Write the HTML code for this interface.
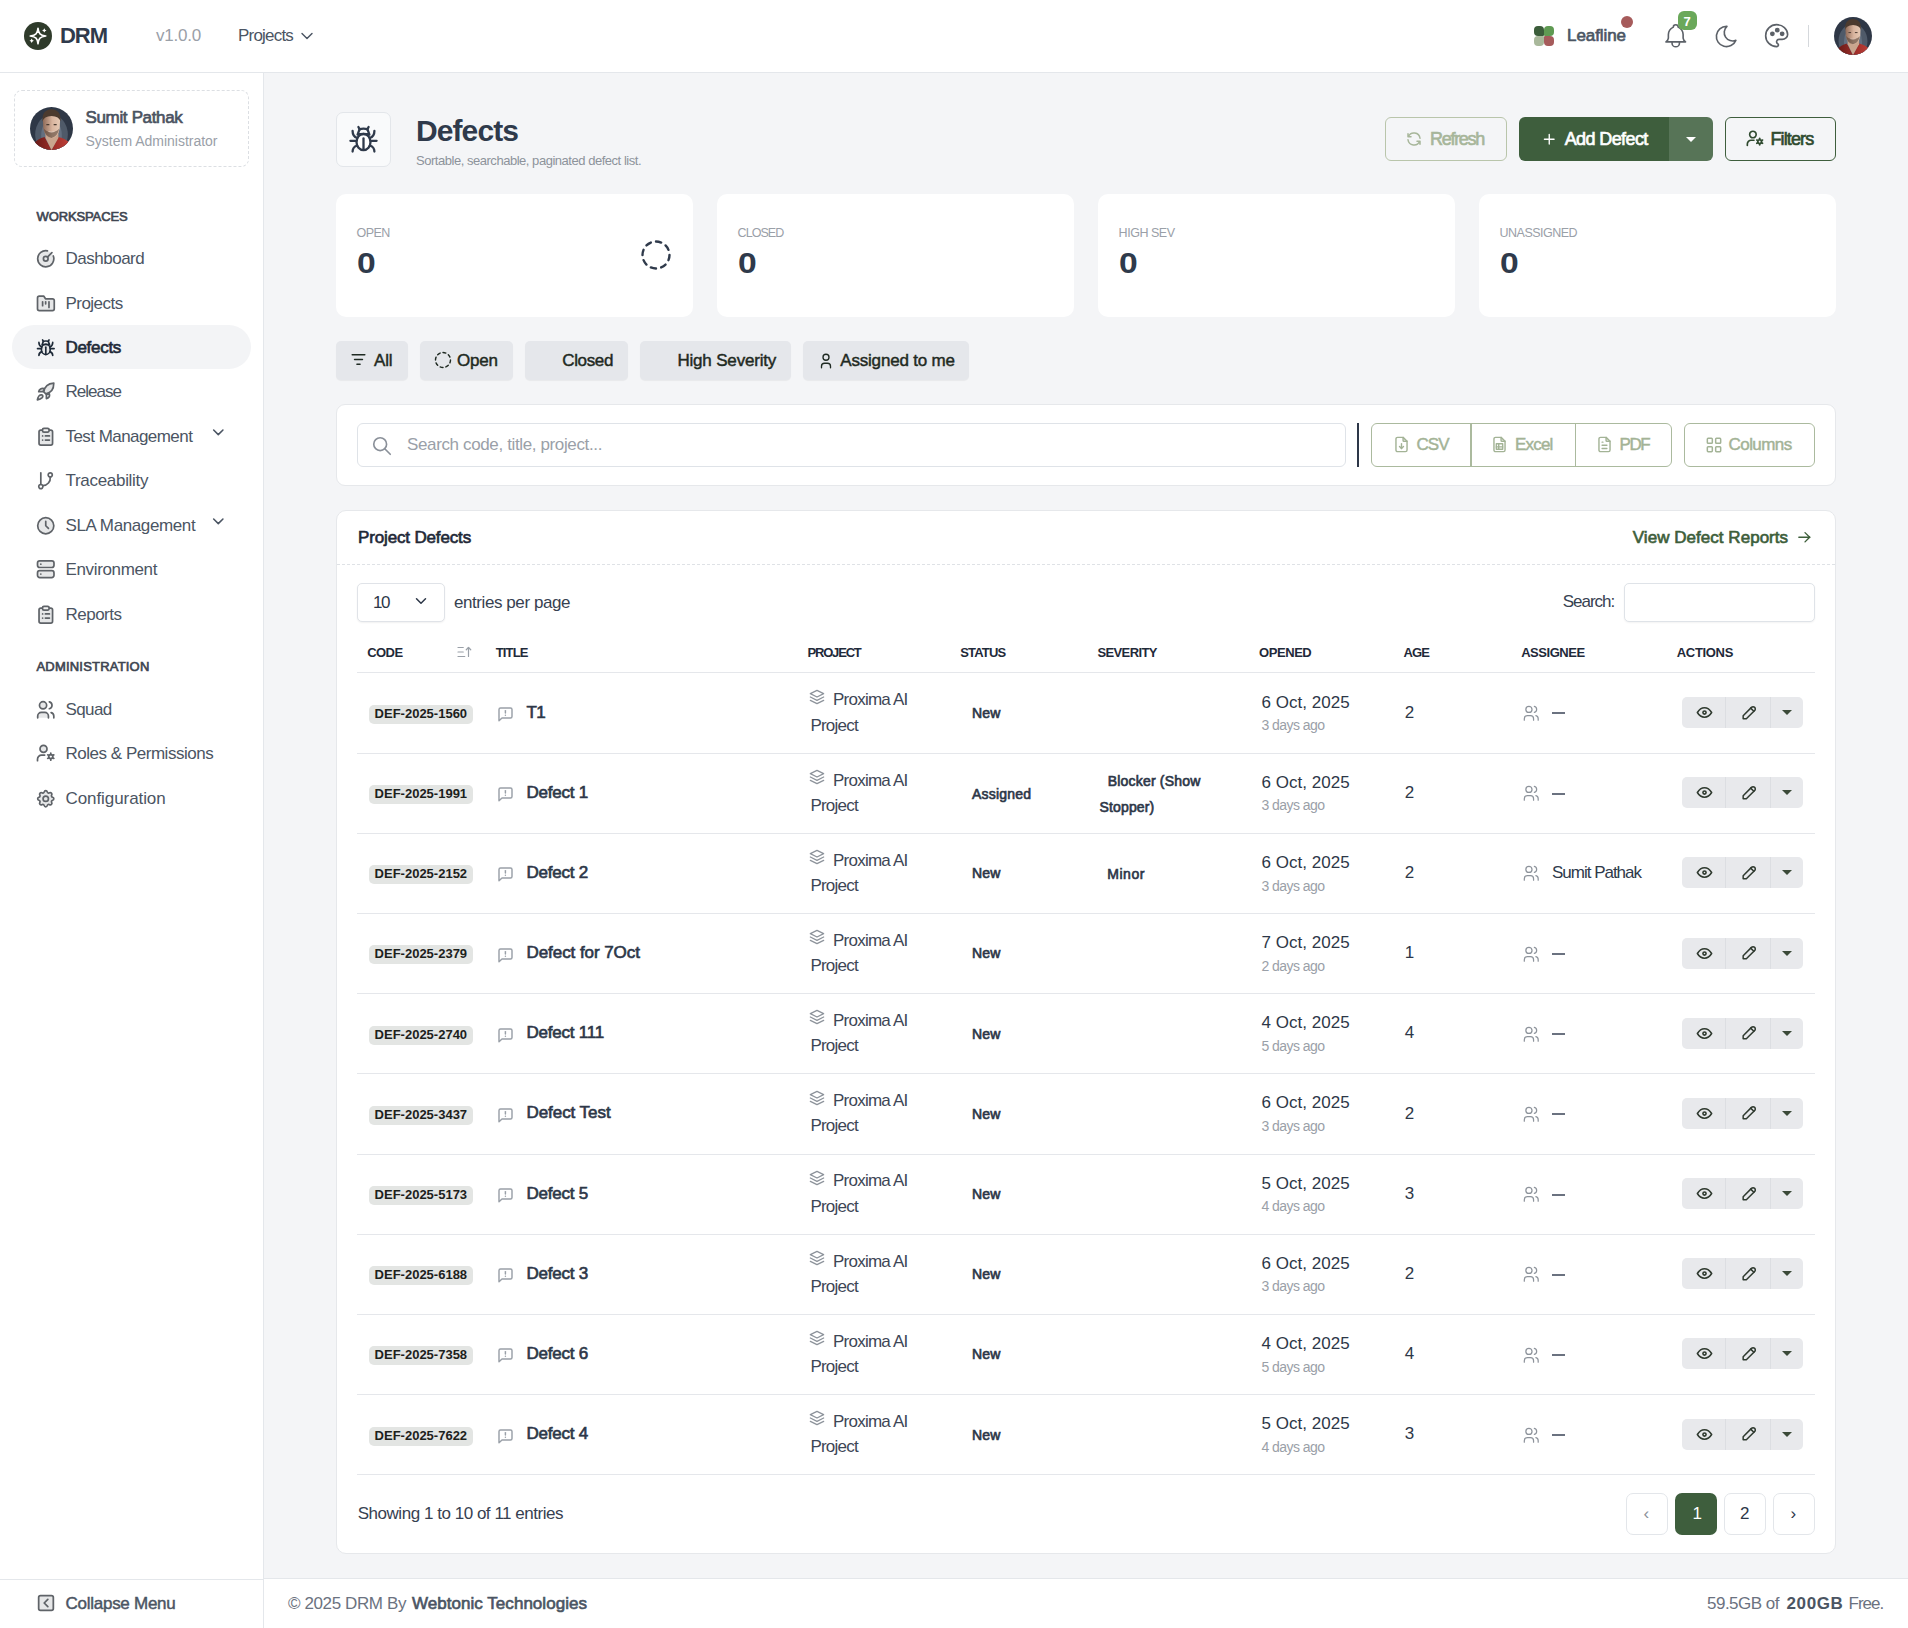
<!DOCTYPE html>
<html><head><meta charset="utf-8"><title>Defects</title>
<style>
html,body{margin:0;padding:0;}
body{width:1908px;height:1628px;overflow:hidden;position:relative;background:#f4f5f7;font-family:"Liberation Sans",sans-serif;}
.t{position:absolute;white-space:nowrap;line-height:1;}
.b{position:absolute;box-sizing:border-box;}
svg.b{overflow:visible;}
</style></head><body>
<div class="b" style="left:0px;top:0px;width:1908px;height:73px;background:#fff;border-bottom:1px solid #e4e7eb;"></div>
<svg class="b" style="left:24px;top:22px" width="28" height="28" viewBox="0 0 28 28"><circle cx="14" cy="14" r="14" fill="#2f3b2b"/><path d="M14 6.2 C14.6 11.7 16 13.2 21.8 14 C16 14.8 14.6 16.3 14 21.8 C13.4 16.3 12 14.8 6.2 14 C12 13.2 13.4 11.7 14 6.2Z" fill="none" stroke="#fff" stroke-width="1.6" stroke-linejoin="round"/><path d="M20.3 6.2 Q20.8 7.9 22.5 8.4 Q20.8 8.9 20.3 10.6 Q19.8 8.9 18.1 8.4 Q19.8 7.9 20.3 6.2Z" fill="#fff"/><path d="M7.7 16.6 Q8.2 18.3 9.9 18.8 Q8.2 19.3 7.7 21 Q7.2 19.3 5.5 18.8 Q7.2 18.3 7.7 16.6Z" fill="#fff"/></svg>
<span class="t" style="left:60.0px;top:24.88px;font-size:22px;color:#2f3a4b;font-weight:700;letter-spacing:-1.034px;">DRM</span>
<span class="t" style="left:156.0px;top:27.11px;font-size:17px;color:#9aa0a8;letter-spacing:-0.218px;">v1.0.0</span>
<span class="t" style="left:238.0px;top:27.11px;font-size:17px;color:#4b5563;letter-spacing:-0.801px;">Projects</span>
<svg class="b" style="left:297px;top:26px;" width="20" height="20" viewBox="0 0 24 24" fill="none" stroke="#4b5563" stroke-width="1.7" stroke-linecap="round" stroke-linejoin="round"><path d="M6 9l6 6l6 -6"/></svg>
<div class="b" style="left:1534px;top:26px;width:9.5px;height:9.5px;background:#3b5d3a;border-radius:4px 4px 1px 4px;"></div>
<div class="b" style="left:1544px;top:26px;width:9.5px;height:9.5px;background:#5f9a52;border-radius:4px 4px 4px 1px;"></div>
<div class="b" style="left:1534px;top:36px;width:9.5px;height:9.5px;background:#a9b89b;border-radius:4px 1px 4px 4px;"></div>
<div class="b" style="left:1544px;top:36px;width:9.5px;height:9.5px;background:#a65b5b;border-radius:1px 4px 4px 4px;"></div>
<span class="t" style="left:1567.0px;top:26.61px;font-size:17px;color:#4b5563;-webkit-text-stroke:0.65px #4b5563;letter-spacing:-0.068px;">Leafline</span>
<div class="b" style="left:1621px;top:16px;width:12px;height:12px;background:#a65b5b;border-radius:50%;"></div>
<svg class="b" style="left:1661px;top:21.3px;" width="29.5" height="29.5" viewBox="0 0 24 24" fill="none" stroke="#5c6168" stroke-width="1.3" stroke-linecap="round" stroke-linejoin="round"><path d="M10 5a2 2 0 1 1 4 0a7 7 0 0 1 4 6v3a4 4 0 0 0 2 3h-16a4 4 0 0 0 2 -3v-3a7 7 0 0 1 4 -6"/><path d="M9 17v1a3 3 0 0 0 6 0v-1"/></svg>
<div class="b" style="left:1678px;top:11px;width:19px;height:19px;background:#6aa85a;border-radius:6px;"></div>
<span class="t" style="left:1683.5px;top:15.00px;font-size:13px;color:#fff;font-weight:700;">7</span>
<svg class="b" style="left:1713.4px;top:22.6px;" width="27" height="27" viewBox="0 0 24 24" fill="none" stroke="#5c6168" stroke-width="1.45" stroke-linecap="round" stroke-linejoin="round"><path d="M12 3c.132 0 .263 0 .393 0a7.5 7.5 0 0 0 7.92 12.446a9 9 0 1 1 -8.313 -12.454z"/></svg>
<svg class="b" style="left:1762.3px;top:21.3px;" width="29.3" height="29.3" viewBox="0 0 24 24" fill="none" stroke="#5c6168" stroke-width="1.35" stroke-linecap="round" stroke-linejoin="round"><path d="M12 21a9 9 0 0 1 0 -18c4.97 0 9 3.582 9 8c0 1.06 -.474 2.078 -1.318 2.828c-.844 .75 -1.989 1.172 -3.182 1.172h-2.5a2 2 0 0 0 -1 3.75a1.3 1.3 0 0 1 -1 2.25"/><circle cx="8.5" cy="10.5" r="1.3" fill="#5c6168"/><circle cx="12.5" cy="7.5" r="1.3" fill="#5c6168"/><circle cx="16.5" cy="10.5" r="1.3" fill="#5c6168"/></svg>
<div class="b" style="left:1808px;top:25px;width:1px;height:22px;background:#d5d8dc;"></div>
<svg class="b" style="left:1834px;top:17px" width="38" height="38" viewBox="0 0 100 100"><defs><clipPath id="ca"><circle cx="50" cy="50" r="50"/></clipPath></defs><g clip-path="url(#ca)"><defs><linearGradient id="fg" x1="0" x2="1" y1="0" y2="0"><stop offset="0" stop-color="#8f6a57"/><stop offset="0.55" stop-color="#d9b59f"/><stop offset="1" stop-color="#e6c9b4"/></linearGradient><linearGradient id="sg" x1="0" x2="1" y1="0" y2="0"><stop offset="0" stop-color="#5e1714"/><stop offset="0.6" stop-color="#a3302b"/><stop offset="1" stop-color="#c4443c"/></linearGradient></defs><rect x="0" y="0" width="100" height="100" fill="#2e3746"/><ellipse cx="50" cy="64" rx="38" ry="46" fill="#4f5a69"/><ellipse cx="50" cy="66" rx="24" ry="38" fill="#647080"/><path d="M8 86 Q18 74 34 70 L50 100 L66 70 Q84 74 94 86 L100 100 L0 100Z" fill="url(#sg)"/><path d="M36 56 H66 V72 L50 100 L36 72Z" fill="#c9a58e"/><path d="M30 30 Q30 16 50 15 Q70 16 70 30 L69 50 Q66 70 50 73 Q34 70 31 50Z" fill="url(#fg)"/><path d="M32 50 Q35 68 50 72 Q65 68 68 50 Q63 58 50 58 Q37 58 32 50Z" fill="#4e3c32" opacity="0.55"/><path d="M29 34 Q27 6 50 5 Q73 6 71 34 Q68 22 50 21 Q32 22 29 34Z" fill="#4b3a2e"/><path d="M38 41 h7 M55 41 h7" stroke="#4a3a30" stroke-width="2.5"/><path d="M43 57 Q50 60 57 57" fill="none" stroke="#f0e0d6" stroke-width="1.5"/></g></svg>
<div class="b" style="left:0px;top:73px;width:264px;height:1555px;background:#fff;border-right:1px solid #e4e7eb;"></div>
<div class="b" style="left:14px;top:90px;width:235px;height:77px;border:1px dashed #dcdfe3;border-radius:8px;"></div>
<svg class="b" style="left:30px;top:107px" width="43" height="43" viewBox="0 0 100 100"><defs><clipPath id="cb"><circle cx="50" cy="50" r="50"/></clipPath></defs><g clip-path="url(#cb)"><defs><linearGradient id="fg2" x1="0" x2="1" y1="0" y2="0"><stop offset="0" stop-color="#8f6a57"/><stop offset="0.55" stop-color="#d9b59f"/><stop offset="1" stop-color="#e6c9b4"/></linearGradient><linearGradient id="sg2" x1="0" x2="1" y1="0" y2="0"><stop offset="0" stop-color="#5e1714"/><stop offset="0.6" stop-color="#a3302b"/><stop offset="1" stop-color="#c4443c"/></linearGradient></defs><rect x="0" y="0" width="100" height="100" fill="#2e3746"/><ellipse cx="50" cy="64" rx="38" ry="46" fill="#4f5a69"/><ellipse cx="50" cy="66" rx="24" ry="38" fill="#647080"/><path d="M8 86 Q18 74 34 70 L50 100 L66 70 Q84 74 94 86 L100 100 L0 100Z" fill="url(#sg2)"/><path d="M36 56 H66 V72 L50 100 L36 72Z" fill="#c9a58e"/><path d="M30 30 Q30 16 50 15 Q70 16 70 30 L69 50 Q66 70 50 73 Q34 70 31 50Z" fill="url(#fg2)"/><path d="M32 50 Q35 68 50 72 Q65 68 68 50 Q63 58 50 58 Q37 58 32 50Z" fill="#4e3c32" opacity="0.55"/><path d="M29 34 Q27 6 50 5 Q73 6 71 34 Q68 22 50 21 Q32 22 29 34Z" fill="#4b3a2e"/><path d="M38 41 h7 M55 41 h7" stroke="#4a3a30" stroke-width="2.5"/><path d="M43 57 Q50 60 57 57" fill="none" stroke="#f0e0d6" stroke-width="1.5"/></g></svg>
<span class="t" style="left:85.5px;top:108.61px;font-size:17px;color:#4a5260;-webkit-text-stroke:0.65px #4a5260;letter-spacing:-0.342px;">Sumit Pathak</span>
<span class="t" style="left:85.5px;top:134.15px;font-size:14px;color:#9aa0a8;letter-spacing:-0.013px;">System Administrator</span>
<span class="t" style="left:36.5px;top:209.50px;font-size:13px;color:#3f4652;-webkit-text-stroke:0.65px #3f4652;letter-spacing:-0.122px;">WORKSPACES</span>
<div class="b" style="left:12px;top:325px;width:239px;height:44px;background:#f3f4f6;border-radius:22px;"></div>
<svg class="b" style="left:34.8px;top:247.75px;" width="21.5" height="21.5" viewBox="0 0 24 24" fill="none" stroke="#5f6368" stroke-width="1.9" stroke-linecap="round" stroke-linejoin="round"><circle cx="12" cy="12" r="9" fill="#e6e7e8" stroke="none"/><path d="M20.46 8.92 A9 9 0 1 1 13.87 3.2"/><path d="M12 12m-2.6 0a2.6 2.6 0 1 0 5.2 0a2.6 2.6 0 1 0 -5.2 0"/><path d="M13.9 10.1 L18.9 5.1"/></svg>
<span class="t" style="left:65.5px;top:249.61px;font-size:17px;color:#4b5563;letter-spacing:-0.495px;">Dashboard</span>
<svg class="b" style="left:34.8px;top:292.75px;" width="21.5" height="21.5" viewBox="0 0 24 24" fill="none" stroke="#5f6368" stroke-width="1.9" stroke-linecap="round" stroke-linejoin="round"><path d="M2.8 5.6 a2 2 0 0 1 2 -2 H9.9 L11.7 6.5 H19.5 a2 2 0 0 1 2 2 V17.7 a2 2 0 0 1 -2 2 H4.8 a2 2 0 0 1 -2 -2Z" fill="#e6e7e8"/><path d="M8.5 9.8 V14.2"/><path d="M11.9 9.8 V12.1"/><path d="M15.6 9.8 V16.1"/></svg>
<span class="t" style="left:65.5px;top:294.61px;font-size:17px;color:#4b5563;letter-spacing:-0.538px;">Projects</span>
<svg class="b" style="left:35.6px;top:337.5px;" width="19" height="19" viewBox="0 0 30 30" fill="none" stroke="#1e2a38" stroke-width="2.6" stroke-linecap="round" stroke-linejoin="round"><ellipse cx="15.5" cy="18" rx="7" ry="8.2" fill="#e6e7e8"/><path d="M9.6 10.6 L11.6 5.2 Q15.5 4.2 19.4 5.2 L21.4 10.6 Q15.5 9.4 9.6 10.6Z"/><path d="M11.8 5.6 L10.4 3"/><path d="M19.2 5.6 L20.6 3"/><path d="M9.2 14 C6.2 13 4.6 10.5 4.6 7"/><path d="M21.8 14 C24.8 13 26.4 10.5 26.4 7"/><path d="M2.4 16.8 H8.5"/><path d="M22.5 16.8 H28.6"/><path d="M9.2 21.5 C6.2 22.5 4.6 25 4.6 27.5"/><path d="M21.8 21.5 C24.8 22.5 26.4 25 26.4 27.5"/><path d="M15.5 14.5 V25.8"/></svg>
<span class="t" style="left:65.5px;top:338.61px;font-size:17px;color:#1e2a38;-webkit-text-stroke:0.65px #1e2a38;letter-spacing:-0.304px;">Defects</span>
<svg class="b" style="left:34px;top:380px;" width="24" height="24" viewBox="0 0 24 24" fill="none" stroke="#5f6368" stroke-width="1.7" stroke-linecap="round" stroke-linejoin="round"><path d="M19.8 3.1 C14 3.5 10.5 7 9.8 11.8 L11.8 13.8 C16.8 13 19.8 9 19.8 3.1Z" fill="#e6e7e8"/><path d="M10 8.6 C7.5 8 5.2 9.2 4.7 11.6 H9.2Z" fill="#e6e7e8"/><path d="M15.4 13.9 C16 16.4 14.8 18.2 12.4 18.7 V14.2Z" fill="#e6e7e8"/><path d="M3.4 19.8 C3.8 16.5 5.8 14.6 7.6 14.8 C9 15 9.2 16.5 8.2 17.6 C7 18.8 5 19.5 3.4 19.8Z" fill="#e6e7e8"/></svg>
<span class="t" style="left:65.5px;top:382.61px;font-size:17px;color:#4b5563;letter-spacing:-0.981px;">Release</span>
<svg class="b" style="left:34.8px;top:425.75px;" width="21.5" height="21.5" viewBox="0 0 24 24" fill="none" stroke="#5f6368" stroke-width="1.9" stroke-linecap="round" stroke-linejoin="round"><path d="M8.4 4.5 H6.5 a2 2 0 0 0 -2 2 V19.3 a2 2 0 0 0 2 2 H17.6 a2 2 0 0 0 2 -2 V6.5 a2 2 0 0 0 -2 -2 H15.7" fill="#e6e7e8"/><path d="M8.4 4.1 a1.5 1.5 0 0 1 1.5 -1.5 h4.3 a1.5 1.5 0 0 1 1.5 1.5 v1.15 a1.5 1.5 0 0 1 -1.5 1.5 h-4.3 a1.5 1.5 0 0 1 -1.5 -1.5z" fill="#f4f4f4"/><path d="M8.5 11.1 h.01"/><path d="M11.6 11.1 h4.5"/><path d="M8.5 15.7 h.01"/><path d="M11.6 15.7 h4.5"/></svg>
<span class="t" style="left:65.5px;top:427.61px;font-size:17px;color:#4b5563;letter-spacing:-0.555px;">Test Management</span>
<svg class="b" style="left:34.8px;top:470.25px;" width="21.5" height="21.5" viewBox="0 0 24 24" fill="none" stroke="#5f6368" stroke-width="1.9" stroke-linecap="round" stroke-linejoin="round"><path d="M6.5 18.5m-2.3 0a2.3 2.3 0 1 0 4.6 0a2.3 2.3 0 1 0 -4.6 0" fill="#fff"/><path d="M17 5.5m-2.3 0a2.3 2.3 0 1 0 4.6 0a2.3 2.3 0 1 0 -4.6 0" fill="#fff"/><path d="M6.5 16.2v-13"/><path d="M17 7.8a8.5 8.5 0 0 1 -8.3 9.6"/></svg>
<span class="t" style="left:65.5px;top:472.11px;font-size:17px;color:#4b5563;letter-spacing:-0.299px;">Traceability</span>
<svg class="b" style="left:34.8px;top:514.75px;" width="21.5" height="21.5" viewBox="0 0 24 24" fill="none" stroke="#5f6368" stroke-width="1.9" stroke-linecap="round" stroke-linejoin="round"><circle cx="12" cy="12" r="9" fill="#e6e7e8"/><path d="M12 7v5l3 3"/></svg>
<span class="t" style="left:65.5px;top:516.61px;font-size:17px;color:#4b5563;letter-spacing:-0.388px;">SLA Management</span>
<svg class="b" style="left:34.8px;top:559.25px;" width="21.5" height="21.5" viewBox="0 0 24 24" fill="none" stroke="#5f6368" stroke-width="1.9" stroke-linecap="round" stroke-linejoin="round"><path d="M2.8 4.5 a2.5 2.5 0 0 1 2.5 -2.5 h13.4 a2.5 2.5 0 0 1 2.5 2.5 v2.5 a2.5 2.5 0 0 1 -2.5 2.5 h-13.4 a2.5 2.5 0 0 1 -2.5 -2.5z" fill="#e6e7e8"/><path d="M2.8 15.5 a2.5 2.5 0 0 1 2.5 -2.5 h13.4 a2.5 2.5 0 0 1 2.5 2.5 v2.7 a2.5 2.5 0 0 1 -2.5 2.5 h-13.4 a2.5 2.5 0 0 1 -2.5 -2.5z" fill="#e6e7e8"/><path d="M6.5 5.75 h.01"/><path d="M6.5 16.85 h.01"/></svg>
<span class="t" style="left:65.5px;top:561.11px;font-size:17px;color:#4b5563;letter-spacing:-0.348px;">Environment</span>
<svg class="b" style="left:34.8px;top:603.75px;" width="21.5" height="21.5" viewBox="0 0 24 24" fill="none" stroke="#5f6368" stroke-width="1.9" stroke-linecap="round" stroke-linejoin="round"><path d="M8.4 4.5 H6.5 a2 2 0 0 0 -2 2 V19.3 a2 2 0 0 0 2 2 H17.6 a2 2 0 0 0 2 -2 V6.5 a2 2 0 0 0 -2 -2 H15.7" fill="#e6e7e8"/><path d="M8.4 4.1 a1.5 1.5 0 0 1 1.5 -1.5 h4.3 a1.5 1.5 0 0 1 1.5 1.5 v1.15 a1.5 1.5 0 0 1 -1.5 1.5 h-4.3 a1.5 1.5 0 0 1 -1.5 -1.5z" fill="#f4f4f4"/><path d="M8.5 11.1 h.01"/><path d="M11.6 11.1 h4.5"/><path d="M8.5 15.7 h.01"/><path d="M11.6 15.7 h4.5"/></svg>
<span class="t" style="left:65.5px;top:605.61px;font-size:17px;color:#4b5563;letter-spacing:-0.517px;">Reports</span>
<svg class="b" style="left:34.8px;top:698.75px;" width="21.5" height="21.5" viewBox="0 0 24 24" fill="none" stroke="#5f6368" stroke-width="1.9" stroke-linecap="round" stroke-linejoin="round"><path d="M9 7m-4 0a4 4 0 1 0 8 0a4 4 0 1 0 -8 0" fill="#e6e7e8"/><path d="M3 21v-2a4 4 0 0 1 4 -4h4a4 4 0 0 1 4 4v2" fill="#e6e7e8"/><path d="M16 3.13a4 4 0 0 1 0 7.75"/><path d="M21 21v-2a4 4 0 0 0 -3 -3.85"/></svg>
<span class="t" style="left:65.5px;top:700.61px;font-size:17px;color:#4b5563;letter-spacing:-0.591px;">Squad</span>
<svg class="b" style="left:34.8px;top:743.25px;" width="21.5" height="21.5" viewBox="0 0 24 24" fill="none" stroke="#5f6368" stroke-width="1.9" stroke-linecap="round" stroke-linejoin="round"><path d="M9.5 6.6m-3.9 0a3.9 3.9 0 1 0 7.8 0a3.9 3.9 0 1 0 -7.8 0" fill="#e6e7e8"/><path d="M2.8 19.8v-1.8a4.5 4.5 0 0 1 4.5 -4.5h3.5"/><path d="M17.6 15.2m-2.3 0a2.3 2.3 0 1 0 4.6 0a2.3 2.3 0 1 0 -4.6 0"/><path d="M17.60 17.50 L17.60 19.20"/><path d="M15.61 16.35 L14.14 17.20"/><path d="M15.61 14.05 L14.14 13.20"/><path d="M17.60 12.90 L17.60 11.20"/><path d="M19.59 14.05 L21.06 13.20"/><path d="M19.59 16.35 L21.06 17.20"/></svg>
<span class="t" style="left:65.5px;top:745.11px;font-size:17px;color:#4b5563;letter-spacing:-0.480px;">Roles &amp; Permissions</span>
<svg class="b" style="left:34.8px;top:788.25px;" width="21.5" height="21.5" viewBox="0 0 24 24" fill="none" stroke="#5f6368" stroke-width="1.9" stroke-linecap="round" stroke-linejoin="round"><path d="M10.325 4.317c.426 -1.756 2.924 -1.756 3.35 0a1.724 1.724 0 0 0 2.573 1.066c1.543 -.94 3.31 .826 2.37 2.37a1.724 1.724 0 0 0 1.065 2.572c1.756 .426 1.756 2.924 0 3.35a1.724 1.724 0 0 0 -1.066 2.573c.94 1.543 -.826 3.31 -2.37 2.37a1.724 1.724 0 0 0 -2.572 1.065c-.426 1.756 -2.924 1.756 -3.35 0a1.724 1.724 0 0 0 -2.573 -1.066c-1.543 .94 -3.31 -.826 -2.37 -2.37a1.724 1.724 0 0 0 -1.065 -2.572c-1.756 -.426 -1.756 -2.924 0 -3.35a1.724 1.724 0 0 0 1.066 -2.573c-.94 -1.543 .826 -3.31 2.37 -2.37c1 .608 2.296 .07 2.572 -1.065z" fill="#e6e7e8"/><path d="M9 12a3 3 0 1 0 6 0a3 3 0 0 0 -6 0"/></svg>
<span class="t" style="left:65.5px;top:790.11px;font-size:17px;color:#4b5563;letter-spacing:-0.078px;">Configuration</span>
<svg class="b" style="left:209.3px;top:422.7px;" width="18.6" height="18.6" viewBox="0 0 24 24" fill="none" stroke="#4b5563" stroke-width="2" stroke-linecap="round" stroke-linejoin="round"><path d="M6 9l6 6l6 -6"/></svg>
<svg class="b" style="left:209.3px;top:511.7px;" width="18.6" height="18.6" viewBox="0 0 24 24" fill="none" stroke="#4b5563" stroke-width="2" stroke-linecap="round" stroke-linejoin="round"><path d="M6 9l6 6l6 -6"/></svg>
<span class="t" style="left:36.5px;top:660.20px;font-size:13px;color:#3f4652;-webkit-text-stroke:0.65px #3f4652;letter-spacing:0.196px;">ADMINISTRATION</span>
<div class="b" style="left:0px;top:1579px;width:264px;height:49px;border-top:1px solid #e4e7eb;background:#fff;border-right:1px solid #e4e7eb;"></div>
<svg class="b" style="left:34.5px;top:1591.5px;" width="22" height="22" viewBox="0 0 24 24" fill="none" stroke="#5f6368" stroke-width="1.9" stroke-linecap="round" stroke-linejoin="round"><path d="M4 4m0 2a2 2 0 0 1 2 -2h12a2 2 0 0 1 2 2v12a2 2 0 0 1 -2 2h-12a2 2 0 0 1 -2 -2z" fill="#e6e7e8"/><path d="M14 8l-4 4l4 4"/></svg>
<span class="t" style="left:65.5px;top:1595.11px;font-size:17px;color:#4b5563;-webkit-text-stroke:0.45px #4b5563;letter-spacing:-0.261px;">Collapse Menu</span>
<div class="b" style="left:336px;top:112px;width:55px;height:55px;background:#f9fafb;border:1px solid #e3e6ea;border-radius:7px;"></div>
<svg class="b" style="left:348px;top:124px;" width="30" height="30" viewBox="0 0 30 30" fill="none" stroke="#2f3a4b" stroke-width="2.3" stroke-linecap="round" stroke-linejoin="round"><ellipse cx="15.5" cy="18" rx="7" ry="8.2" fill="#fff"/><path d="M9.6 10.6 L11.6 5.2 Q15.5 4.2 19.4 5.2 L21.4 10.6 Q15.5 9.4 9.6 10.6Z"/><path d="M11.8 5.6 L10.4 3"/><path d="M19.2 5.6 L20.6 3"/><path d="M9.2 14 C6.2 13 4.6 10.5 4.6 7"/><path d="M21.8 14 C24.8 13 26.4 10.5 26.4 7"/><path d="M2.4 16.8 H8.5"/><path d="M22.5 16.8 H28.6"/><path d="M9.2 21.5 C6.2 22.5 4.6 25 4.6 27.5"/><path d="M21.8 21.5 C24.8 22.5 26.4 25 26.4 27.5"/><path d="M15.5 14.5 V25.8"/></svg>
<span class="t" style="left:416.0px;top:116.20px;font-size:30px;color:#2f3a4b;font-weight:700;letter-spacing:-0.911px;">Defects</span>
<span class="t" style="left:416.0px;top:153.60px;font-size:13px;color:#8d939b;letter-spacing:-0.470px;">Sortable, searchable, paginated defect list.</span>
<div class="b" style="left:1385px;top:117px;width:122px;height:44px;border:1px solid #b9c5ab;border-radius:6px;"></div>
<svg class="b" style="left:1404.5px;top:130px;" width="18" height="18" viewBox="0 0 24 24" fill="none" stroke="#a7b69a" stroke-width="2" stroke-linecap="round" stroke-linejoin="round"><path d="M20 11a8.1 8.1 0 0 0 -15.5 -2m-.5 -4v4h4"/><path d="M4 13a8.1 8.1 0 0 0 15.5 2m.5 4v-4h-4"/></svg>
<span class="t" style="left:1430.0px;top:129.86px;font-size:18px;color:#a7b69a;-webkit-text-stroke:0.65px #a7b69a;letter-spacing:-1.289px;">Refresh</span>
<div class="b" style="left:1519px;top:117px;width:151px;height:44px;background:#3e5e3d;border-radius:6px 0 0 6px;"></div>
<div class="b" style="left:1669px;top:117px;width:44px;height:44px;background:#577457;border-radius:0 6px 6px 0;"></div>
<svg class="b" style="left:1541px;top:130.75px;" width="16.5" height="16.5" viewBox="0 0 24 24" fill="none" stroke="#fff" stroke-width="2" stroke-linecap="round" stroke-linejoin="round"><path d="M12 5l0 14"/><path d="M5 12l14 0"/></svg>
<span class="t" style="left:1564.7px;top:129.86px;font-size:18px;color:#fff;-webkit-text-stroke:0.65px #fff;letter-spacing:-0.605px;">Add Defect</span>
<svg class="b" style="left:1685.8px;top:136.5px" width="10" height="5" viewBox="0 0 10 5"><path d="M0 0h10l-5 5z" fill="#fff"/></svg>
<div class="b" style="left:1725px;top:117px;width:111px;height:44px;border:1px solid #3e5e3d;border-radius:6px;"></div>
<svg class="b" style="left:1745.3px;top:128.5px;" width="20" height="20" viewBox="0 0 24 24" fill="none" stroke="#2f4a2f" stroke-width="2" stroke-linecap="round" stroke-linejoin="round"><path d="M9.5 6.6m-3.9 0a3.9 3.9 0 1 0 7.8 0a3.9 3.9 0 1 0 -7.8 0" fill="none"/><path d="M2.8 19.8v-1.8a4.5 4.5 0 0 1 4.5 -4.5h3.5"/><path d="M17.6 15.2m-2.3 0a2.3 2.3 0 1 0 4.6 0a2.3 2.3 0 1 0 -4.6 0"/><path d="M17.60 17.50 L17.60 19.20"/><path d="M15.61 16.35 L14.14 17.20"/><path d="M15.61 14.05 L14.14 13.20"/><path d="M17.60 12.90 L17.60 11.20"/><path d="M19.59 14.05 L21.06 13.20"/><path d="M19.59 16.35 L21.06 17.20"/></svg>
<span class="t" style="left:1770.4px;top:129.86px;font-size:18px;color:#2f4a2f;-webkit-text-stroke:0.65px #2f4a2f;letter-spacing:-0.857px;">Filters</span>
<div class="b" style="left:336px;top:194px;width:357px;height:123px;background:#fff;border-radius:10px;"></div>
<span class="t" style="left:356.6px;top:226.52px;font-size:12.5px;color:#9aa0a8;letter-spacing:-0.606px;">OPEN</span>
<span class="t" style="left:357.2px;top:249.45px;font-size:29px;color:#2f3a4b;font-weight:700;transform:scaleX(1.16);transform-origin:0 0;">0</span>
<div class="b" style="left:717px;top:194px;width:357px;height:123px;background:#fff;border-radius:10px;"></div>
<span class="t" style="left:737.6px;top:226.52px;font-size:12.5px;color:#9aa0a8;letter-spacing:-0.967px;">CLOSED</span>
<span class="t" style="left:738.2px;top:249.45px;font-size:29px;color:#2f3a4b;font-weight:700;transform:scaleX(1.16);transform-origin:0 0;">0</span>
<div class="b" style="left:1098px;top:194px;width:357px;height:123px;background:#fff;border-radius:10px;"></div>
<span class="t" style="left:1118.6px;top:226.52px;font-size:12.5px;color:#9aa0a8;letter-spacing:-0.467px;">HIGH SEV</span>
<span class="t" style="left:1119.2px;top:249.45px;font-size:29px;color:#2f3a4b;font-weight:700;transform:scaleX(1.16);transform-origin:0 0;">0</span>
<div class="b" style="left:1479px;top:194px;width:357px;height:123px;background:#fff;border-radius:10px;"></div>
<span class="t" style="left:1499.6px;top:226.52px;font-size:12.5px;color:#9aa0a8;letter-spacing:-0.526px;">UNASSIGNED</span>
<span class="t" style="left:1500.2px;top:249.45px;font-size:29px;color:#2f3a4b;font-weight:700;transform:scaleX(1.16);transform-origin:0 0;">0</span>
<svg class="b" style="left:637.8px;top:236.5px;" width="36" height="36" viewBox="0 0 24 24" fill="none" stroke="#2f3a4b" stroke-width="1.6" stroke-linecap="round" stroke-linejoin="round"><path d="M8.56 3.69a9 9 0 0 0 -2.92 1.95"/><path d="M3.69 8.56a9 9 0 0 0 -.69 3.44"/><path d="M3.69 15.44a9 9 0 0 0 1.95 2.92"/><path d="M8.56 20.31a9 9 0 0 0 3.44 .69"/><path d="M15.44 20.31a9 9 0 0 0 2.92 -1.95"/><path d="M20.31 15.44a9 9 0 0 0 .69 -3.44"/><path d="M20.31 8.56a9 9 0 0 0 -1.95 -2.92"/><path d="M15.44 3.69a9 9 0 0 0 -3.44 -.69"/></svg>
<div class="b" style="left:336px;top:341px;width:72px;height:39px;background:#e5e7eb;border-radius:5px;box-shadow:0 1px 1px rgba(0,0,0,.05);"></div>
<div class="b" style="left:420px;top:341px;width:93px;height:39px;background:#e5e7eb;border-radius:5px;box-shadow:0 1px 1px rgba(0,0,0,.05);"></div>
<div class="b" style="left:525px;top:341px;width:103px;height:39px;background:#e5e7eb;border-radius:5px;box-shadow:0 1px 1px rgba(0,0,0,.05);"></div>
<div class="b" style="left:640px;top:341px;width:151px;height:39px;background:#e5e7eb;border-radius:5px;box-shadow:0 1px 1px rgba(0,0,0,.05);"></div>
<div class="b" style="left:803px;top:341px;width:166px;height:39px;background:#e5e7eb;border-radius:5px;box-shadow:0 1px 1px rgba(0,0,0,.05);"></div>
<svg class="b" style="left:349px;top:349.5px;" width="19" height="19" viewBox="0 0 24 24" fill="none" stroke="#1f2a22" stroke-width="1.8" stroke-linecap="round" stroke-linejoin="round"><path d="M4 6h16"/><path d="M7 12h10"/><path d="M10 18h4"/></svg>
<span class="t" style="left:374.0px;top:351.61px;font-size:17px;color:#1f2a22;-webkit-text-stroke:0.45px #1f2a22;letter-spacing:-0.165px;">All</span>
<svg class="b" style="left:432.5px;top:350px;" width="20" height="20" viewBox="0 0 24 24" fill="none" stroke="#1f2a22" stroke-width="1.7" stroke-linecap="round" stroke-linejoin="round"><path d="M8.56 3.69a9 9 0 0 0 -2.92 1.95"/><path d="M3.69 8.56a9 9 0 0 0 -.69 3.44"/><path d="M3.69 15.44a9 9 0 0 0 1.95 2.92"/><path d="M8.56 20.31a9 9 0 0 0 3.44 .69"/><path d="M15.44 20.31a9 9 0 0 0 2.92 -1.95"/><path d="M20.31 15.44a9 9 0 0 0 .69 -3.44"/><path d="M20.31 8.56a9 9 0 0 0 -1.95 -2.92"/><path d="M15.44 3.69a9 9 0 0 0 -3.44 -.69"/></svg>
<span class="t" style="left:457.0px;top:351.61px;font-size:17px;color:#1f2a22;-webkit-text-stroke:0.45px #1f2a22;letter-spacing:-0.221px;">Open</span>
<span class="t" style="left:562.3px;top:351.61px;font-size:17px;color:#1f2a22;-webkit-text-stroke:0.45px #1f2a22;letter-spacing:-0.369px;">Closed</span>
<span class="t" style="left:677.4px;top:351.61px;font-size:17px;color:#1f2a22;-webkit-text-stroke:0.45px #1f2a22;letter-spacing:-0.176px;">High Severity</span>
<svg class="b" style="left:816.5px;top:351.5px;" width="18" height="18" viewBox="0 0 24 24" fill="none" stroke="#1f2a22" stroke-width="1.8" stroke-linecap="round" stroke-linejoin="round"><path d="M8 7a4 4 0 1 0 8 0a4 4 0 0 0 -8 0"/><path d="M6 21v-2a4 4 0 0 1 4 -4h4a4 4 0 0 1 4 4v2"/></svg>
<span class="t" style="left:840.3px;top:351.61px;font-size:17px;color:#1f2a22;-webkit-text-stroke:0.45px #1f2a22;letter-spacing:-0.198px;">Assigned to me</span>
<div class="b" style="left:336px;top:404px;width:1500px;height:82px;background:#fff;border:1px solid #e6e8eb;border-radius:9px;"></div>
<div class="b" style="left:357px;top:423px;width:989px;height:44px;background:#fff;border:1px solid #dfe3e8;border-radius:6px;"></div>
<svg class="b" style="left:371px;top:434.7px;" width="22" height="22" viewBox="0 0 24 24" fill="none" stroke="#8a9099" stroke-width="1.8" stroke-linecap="round" stroke-linejoin="round"><path d="M10 10m-7 0a7 7 0 1 0 14 0a7 7 0 1 0 -14 0"/><path d="M21 21l-6 -6"/></svg>
<span class="t" style="left:407.0px;top:435.61px;font-size:17px;color:#9aa0a8;letter-spacing:-0.366px;">Search code, title, project...</span>
<div class="b" style="left:1357px;top:423px;width:2px;height:44px;background:#2d3748;"></div>
<div class="b" style="left:1371px;top:423px;width:301px;height:44px;border:1px solid #abba9e;border-radius:6px;"></div>
<div class="b" style="left:1470px;top:423px;width:1.5px;height:44px;background:#abba9e;"></div>
<div class="b" style="left:1574.5px;top:423px;width:1.5px;height:44px;background:#abba9e;"></div>
<svg class="b" style="left:1391.5px;top:434.5px;" width="19" height="19" viewBox="0 0 24 24" fill="none" stroke="#a3b396" stroke-width="1.8" stroke-linecap="round" stroke-linejoin="round"><path d="M14 3v4a1 1 0 0 0 1 1h4"/><path d="M17 21h-10a2 2 0 0 1 -2 -2v-14a2 2 0 0 1 2 -2h7l5 5v11a2 2 0 0 1 -2 2z"/><path d="M12 17v-6"/><path d="M9.5 14.5l2.5 2.5l2.5 -2.5"/></svg>
<span class="t" style="left:1416.5px;top:435.61px;font-size:17px;color:#a3b396;-webkit-text-stroke:0.45px #a3b396;letter-spacing:-0.919px;">CSV</span>
<svg class="b" style="left:1490.2px;top:434.5px;" width="19" height="19" viewBox="0 0 24 24" fill="none" stroke="#a3b396" stroke-width="1.8" stroke-linecap="round" stroke-linejoin="round"><path d="M14 3v4a1 1 0 0 0 1 1h4"/><path d="M17 21h-10a2 2 0 0 1 -2 -2v-14a2 2 0 0 1 2 -2h7l5 5v11a2 2 0 0 1 -2 2z"/><path d="M8 11h8v7h-8z"/><path d="M8 15h8"/><path d="M11 11v7"/></svg>
<span class="t" style="left:1515.0px;top:435.61px;font-size:17px;color:#a3b396;-webkit-text-stroke:0.45px #a3b396;letter-spacing:-0.794px;">Excel</span>
<svg class="b" style="left:1594.5px;top:434.5px;" width="19" height="19" viewBox="0 0 24 24" fill="none" stroke="#a3b396" stroke-width="1.8" stroke-linecap="round" stroke-linejoin="round"><path d="M14 3v4a1 1 0 0 0 1 1h4"/><path d="M17 21h-10a2 2 0 0 1 -2 -2v-14a2 2 0 0 1 2 -2h7l5 5v11a2 2 0 0 1 -2 2z"/><path d="M9 9l1 0"/><path d="M9 13l6 0"/><path d="M9 17l6 0"/></svg>
<span class="t" style="left:1619.6px;top:435.61px;font-size:17px;color:#a3b396;-webkit-text-stroke:0.45px #a3b396;letter-spacing:-1.533px;">PDF</span>
<div class="b" style="left:1684px;top:423px;width:131px;height:44px;border:1px solid #abba9e;border-radius:6px;"></div>
<svg class="b" style="left:1703.8px;top:435px;" width="20" height="20" viewBox="0 0 24 24" fill="none" stroke="#a3b396" stroke-width="1.8" stroke-linecap="round" stroke-linejoin="round"><path d="M4 4m0 1a1 1 0 0 1 1 -1h4a1 1 0 0 1 1 1v4a1 1 0 0 1 -1 1h-4a1 1 0 0 1 -1 -1z"/><path d="M14 4m0 1a1 1 0 0 1 1 -1h4a1 1 0 0 1 1 1v4a1 1 0 0 1 -1 1h-4a1 1 0 0 1 -1 -1z"/><path d="M4 14m0 1a1 1 0 0 1 1 -1h4a1 1 0 0 1 1 1v4a1 1 0 0 1 -1 1h-4a1 1 0 0 1 -1 -1z"/><path d="M14 14m0 1a1 1 0 0 1 1 -1h4a1 1 0 0 1 1 1v4a1 1 0 0 1 -1 1h-4a1 1 0 0 1 -1 -1z"/></svg>
<span class="t" style="left:1728.6px;top:435.61px;font-size:17px;color:#a3b396;-webkit-text-stroke:0.45px #a3b396;letter-spacing:-0.582px;">Columns</span>
<div class="b" style="left:336px;top:510px;width:1500px;height:1044px;background:#fff;border:1px solid #e6e8eb;border-radius:10px;"></div>
<span class="t" style="left:358.0px;top:528.91px;font-size:17px;color:#1f2937;-webkit-text-stroke:0.65px #1f2937;letter-spacing:-0.151px;">Project Defects</span>
<span class="t" style="left:1632.8px;top:528.91px;font-size:17px;color:#3d5e3a;-webkit-text-stroke:0.65px #3d5e3a;letter-spacing:0.035px;">View Defect Reports</span>
<svg class="b" style="left:1795.2px;top:527.5px;" width="18.5" height="18.5" viewBox="0 0 24 24" fill="none" stroke="#3d5e3a" stroke-width="1.8" stroke-linecap="round" stroke-linejoin="round"><path d="M5 12l14 0"/><path d="M13 18l6 -6"/><path d="M13 6l6 6"/></svg>
<div class="b" style="left:337px;top:564px;width:1498px;height:1px;border-top:1px dashed #dfe2e6;"></div>
<div class="b" style="left:357px;top:583px;width:88px;height:39px;background:#fff;border:1px solid #e0e3e8;border-radius:5px;box-shadow:0 1px 2px rgba(0,0,0,.06);"></div>
<span class="t" style="left:372.9px;top:593.81px;font-size:17px;color:#2d3748;letter-spacing:-1.404px;">10</span>
<svg class="b" style="left:412px;top:592px;" width="18" height="18" viewBox="0 0 24 24" fill="none" stroke="#2d3748" stroke-width="2" stroke-linecap="round" stroke-linejoin="round"><path d="M6 9l6 6l6 -6"/></svg>
<span class="t" style="left:453.9px;top:593.81px;font-size:17px;color:#374151;letter-spacing:-0.416px;">entries per page</span>
<span class="t" style="left:1562.8px;top:593.41px;font-size:17px;color:#374151;letter-spacing:-1.026px;">Search:</span>
<div class="b" style="left:1624px;top:583px;width:191px;height:39px;background:#fff;border:1px solid #dfe3e8;border-radius:5px;box-shadow:0 1px 2px rgba(0,0,0,.05);"></div>
<span class="t" style="left:367.2px;top:646.00px;font-size:13px;color:#1f2a3a;font-weight:700;letter-spacing:-0.540px;">CODE</span>
<span class="t" style="left:495.7px;top:646.00px;font-size:13px;color:#1f2a3a;font-weight:700;letter-spacing:-0.841px;">TITLE</span>
<span class="t" style="left:807.5px;top:646.00px;font-size:13px;color:#1f2a3a;font-weight:700;letter-spacing:-1.186px;">PROJECT</span>
<span class="t" style="left:960.2px;top:646.00px;font-size:13px;color:#1f2a3a;font-weight:700;letter-spacing:-0.795px;">STATUS</span>
<span class="t" style="left:1097.4px;top:646.00px;font-size:13px;color:#1f2a3a;font-weight:700;letter-spacing:-0.600px;">SEVERITY</span>
<span class="t" style="left:1259.1px;top:646.00px;font-size:13px;color:#1f2a3a;font-weight:700;letter-spacing:-0.450px;">OPENED</span>
<span class="t" style="left:1403.4px;top:646.00px;font-size:13px;color:#1f2a3a;font-weight:700;letter-spacing:-0.857px;">AGE</span>
<span class="t" style="left:1521.2px;top:646.00px;font-size:13px;color:#1f2a3a;font-weight:700;letter-spacing:-0.473px;">ASSIGNEE</span>
<span class="t" style="left:1676.8px;top:646.00px;font-size:13px;color:#1f2a3a;font-weight:700;letter-spacing:-0.329px;">ACTIONS</span>
<svg class="b" style="left:455.2px;top:642.5px;" width="18" height="18" viewBox="0 0 24 24" fill="none" stroke="#9aa0a8" stroke-width="1.6" stroke-linecap="round" stroke-linejoin="round"><path d="M4 6l7 0"/><path d="M4 12l7 0"/><path d="M4 18l9 0"/><path d="M15 9l3 -3l3 3"/><path d="M18 6l0 12"/></svg>
<div class="b" style="left:357px;top:672px;width:1458px;height:1px;background:#e5e7eb;"></div>
<div class="b" style="left:357px;top:753.0px;width:1458px;height:1px;background:#e5e7eb;"></div>
<div class="b" style="left:369px;top:705px;width:104px;height:19px;background:#e3e5e3;border-radius:5px;"></div>
<span class="t" style="left:374.6px;top:706.90px;font-size:13px;color:#1c211c;font-weight:700;">DEF-2025-1560</span>
<svg class="b" style="left:496px;top:705.0px;" width="20" height="20" viewBox="0 0 20 20" fill="none" stroke="#9aa0a8" stroke-width="1.45" stroke-linecap="round" stroke-linejoin="round"><path d="M6 12.9 L3 15.8 V4.4 Q3 2.9 4.5 2.9 H14.5 Q16 2.9 16 4.4 V11.4 Q16 12.9 14.5 12.9 Z"/><path d="M9.4 5.6 V7.9"/><path d="M9.4 10.1 V10.2"/></svg>
<span class="t" style="left:526.5px;top:703.51px;font-size:17px;color:#2d3748;-webkit-text-stroke:0.65px #2d3748;letter-spacing:-0.694px;">T1</span>
<svg class="b" style="left:807.3px;top:686.6px;" width="20" height="20" viewBox="0 0 24 24" fill="none" stroke="#8d939b" stroke-width="1.5" stroke-linecap="round" stroke-linejoin="round"><path d="M12 4l-8 4l8 4l8 -4l-8 -4"/><path d="M4 12l8 4l8 -4"/><path d="M4 16l8 4l8 -4"/></svg>
<span class="t" style="left:833.0px;top:691.41px;font-size:17px;color:#3d4656;letter-spacing:-0.769px;">Proxima AI</span>
<span class="t" style="left:810.4px;top:716.51px;font-size:17px;color:#3d4656;letter-spacing:-0.772px;">Project</span>
<span class="t" style="left:971.9px;top:705.95px;font-size:14px;color:#2d3748;-webkit-text-stroke:0.65px #2d3748;letter-spacing:0.260px;">New</span>
<span class="t" style="left:1261.4px;top:693.51px;font-size:17px;color:#2d3748;letter-spacing:0.038px;">6 Oct, 2025</span>
<span class="t" style="left:1261.4px;top:718.15px;font-size:14px;color:#9aa0a8;letter-spacing:-0.549px;">3 days ago</span>
<span class="t" style="left:1404.8px;top:703.61px;font-size:17px;color:#2d3748;">2</span>
<svg class="b" style="left:1522.2px;top:704.1px;" width="18.5" height="18.5" viewBox="0 0 24 24" fill="none" stroke="#8d939b" stroke-width="1.6" stroke-linecap="round" stroke-linejoin="round"><path d="M9 7m-4 0a4 4 0 1 0 8 0a4 4 0 1 0 -8 0"/><path d="M3 21v-2a4 4 0 0 1 4 -4h4a4 4 0 0 1 4 4v2"/><path d="M16 3.13a4 4 0 0 1 0 7.75"/><path d="M21 21v-2a4 4 0 0 0 -3 -3.85"/></svg>
<div class="b" style="left:1552px;top:712px;width:13px;height:2px;background:#6b7280;"></div>
<div class="b" style="left:1682px;top:697px;width:121px;height:31px;background:#e8e9ec;border-radius:5px;"></div>
<div class="b" style="left:1725px;top:697px;width:1px;height:31px;background:#dcdee2;"></div>
<div class="b" style="left:1770px;top:697px;width:1px;height:31px;background:#dcdee2;"></div>
<svg class="b" style="left:1694.5px;top:703.0px;" width="19" height="19" viewBox="0 0 24 24" fill="none" stroke="#2f3a2f" stroke-width="2" stroke-linecap="round" stroke-linejoin="round"><path d="M10 12a2 2 0 1 0 4 0a2 2 0 0 0 -4 0"/><path d="M21 12c-2.4 4 -5.4 6 -9 6c-3.6 0 -6.6 -2 -9 -6c2.4 -4 5.4 -6 9 -6c3.6 0 6.6 2 9 6"/></svg>
<svg class="b" style="left:1739.5px;top:702.5px;" width="19" height="19" viewBox="0 0 24 24" fill="none" stroke="#2f3a2f" stroke-width="1.9" stroke-linecap="round" stroke-linejoin="round"><path d="M4 20h4l10.5 -10.5a2.828 2.828 0 1 0 -4 -4l-10.5 10.5v4"/><path d="M13.5 6.5l4 4"/></svg>
<svg class="b" style="left:1781.6px;top:710.0px" width="10" height="5" viewBox="0 0 10 5"><path d="M0 0h10l-5 5z" fill="#3b4a38"/></svg>
<div class="b" style="left:357px;top:833.0px;width:1458px;height:1px;background:#e5e7eb;"></div>
<div class="b" style="left:369px;top:785px;width:104px;height:19px;background:#e3e5e3;border-radius:5px;"></div>
<span class="t" style="left:374.6px;top:787.08px;font-size:13px;color:#1c211c;font-weight:700;">DEF-2025-1991</span>
<svg class="b" style="left:496px;top:785.1800000000001px;" width="20" height="20" viewBox="0 0 20 20" fill="none" stroke="#9aa0a8" stroke-width="1.45" stroke-linecap="round" stroke-linejoin="round"><path d="M6 12.9 L3 15.8 V4.4 Q3 2.9 4.5 2.9 H14.5 Q16 2.9 16 4.4 V11.4 Q16 12.9 14.5 12.9 Z"/><path d="M9.4 5.6 V7.9"/><path d="M9.4 10.1 V10.2"/></svg>
<span class="t" style="left:526.5px;top:783.69px;font-size:17px;color:#2d3748;-webkit-text-stroke:0.65px #2d3748;letter-spacing:-0.225px;">Defect 1</span>
<svg class="b" style="left:807.3px;top:766.7800000000001px;" width="20" height="20" viewBox="0 0 24 24" fill="none" stroke="#8d939b" stroke-width="1.5" stroke-linecap="round" stroke-linejoin="round"><path d="M12 4l-8 4l8 4l8 -4l-8 -4"/><path d="M4 12l8 4l8 -4"/><path d="M4 16l8 4l8 -4"/></svg>
<span class="t" style="left:833.0px;top:771.59px;font-size:17px;color:#3d4656;letter-spacing:-0.769px;">Proxima AI</span>
<span class="t" style="left:810.4px;top:796.69px;font-size:17px;color:#3d4656;letter-spacing:-0.772px;">Project</span>
<span class="t" style="left:971.9px;top:787.33px;font-size:14px;color:#2d3748;-webkit-text-stroke:0.65px #2d3748;letter-spacing:0.236px;">Assigned</span>
<span class="t" style="left:1107.8px;top:774.23px;font-size:14px;color:#2d3748;-webkit-text-stroke:0.65px #2d3748;letter-spacing:0.188px;">Blocker (Show</span>
<span class="t" style="left:1099.5px;top:799.73px;font-size:14px;color:#2d3748;-webkit-text-stroke:0.65px #2d3748;letter-spacing:0.144px;">Stopper)</span>
<span class="t" style="left:1261.4px;top:773.69px;font-size:17px;color:#2d3748;letter-spacing:0.038px;">6 Oct, 2025</span>
<span class="t" style="left:1261.4px;top:798.33px;font-size:14px;color:#9aa0a8;letter-spacing:-0.549px;">3 days ago</span>
<span class="t" style="left:1404.8px;top:783.79px;font-size:17px;color:#2d3748;">2</span>
<svg class="b" style="left:1522.2px;top:784.2800000000001px;" width="18.5" height="18.5" viewBox="0 0 24 24" fill="none" stroke="#8d939b" stroke-width="1.6" stroke-linecap="round" stroke-linejoin="round"><path d="M9 7m-4 0a4 4 0 1 0 8 0a4 4 0 1 0 -8 0"/><path d="M3 21v-2a4 4 0 0 1 4 -4h4a4 4 0 0 1 4 4v2"/><path d="M16 3.13a4 4 0 0 1 0 7.75"/><path d="M21 21v-2a4 4 0 0 0 -3 -3.85"/></svg>
<div class="b" style="left:1552px;top:793px;width:13px;height:2px;background:#6b7280;"></div>
<div class="b" style="left:1682px;top:777px;width:121px;height:31px;background:#e8e9ec;border-radius:5px;"></div>
<div class="b" style="left:1725px;top:777px;width:1px;height:31px;background:#dcdee2;"></div>
<div class="b" style="left:1770px;top:777px;width:1px;height:31px;background:#dcdee2;"></div>
<svg class="b" style="left:1694.5px;top:783.1800000000001px;" width="19" height="19" viewBox="0 0 24 24" fill="none" stroke="#2f3a2f" stroke-width="2" stroke-linecap="round" stroke-linejoin="round"><path d="M10 12a2 2 0 1 0 4 0a2 2 0 0 0 -4 0"/><path d="M21 12c-2.4 4 -5.4 6 -9 6c-3.6 0 -6.6 -2 -9 -6c2.4 -4 5.4 -6 9 -6c3.6 0 6.6 2 9 6"/></svg>
<svg class="b" style="left:1739.5px;top:782.6800000000001px;" width="19" height="19" viewBox="0 0 24 24" fill="none" stroke="#2f3a2f" stroke-width="1.9" stroke-linecap="round" stroke-linejoin="round"><path d="M4 20h4l10.5 -10.5a2.828 2.828 0 1 0 -4 -4l-10.5 10.5v4"/><path d="M13.5 6.5l4 4"/></svg>
<svg class="b" style="left:1781.6px;top:790.2px" width="10" height="5" viewBox="0 0 10 5"><path d="M0 0h10l-5 5z" fill="#3b4a38"/></svg>
<div class="b" style="left:357px;top:913.0px;width:1458px;height:1px;background:#e5e7eb;"></div>
<div class="b" style="left:369px;top:865px;width:104px;height:19px;background:#e3e5e3;border-radius:5px;"></div>
<span class="t" style="left:374.6px;top:867.26px;font-size:13px;color:#1c211c;font-weight:700;">DEF-2025-2152</span>
<svg class="b" style="left:496px;top:865.36px;" width="20" height="20" viewBox="0 0 20 20" fill="none" stroke="#9aa0a8" stroke-width="1.45" stroke-linecap="round" stroke-linejoin="round"><path d="M6 12.9 L3 15.8 V4.4 Q3 2.9 4.5 2.9 H14.5 Q16 2.9 16 4.4 V11.4 Q16 12.9 14.5 12.9 Z"/><path d="M9.4 5.6 V7.9"/><path d="M9.4 10.1 V10.2"/></svg>
<span class="t" style="left:526.5px;top:863.87px;font-size:17px;color:#2d3748;-webkit-text-stroke:0.65px #2d3748;letter-spacing:-0.225px;">Defect 2</span>
<svg class="b" style="left:807.3px;top:846.96px;" width="20" height="20" viewBox="0 0 24 24" fill="none" stroke="#8d939b" stroke-width="1.5" stroke-linecap="round" stroke-linejoin="round"><path d="M12 4l-8 4l8 4l8 -4l-8 -4"/><path d="M4 12l8 4l8 -4"/><path d="M4 16l8 4l8 -4"/></svg>
<span class="t" style="left:833.0px;top:851.77px;font-size:17px;color:#3d4656;letter-spacing:-0.769px;">Proxima AI</span>
<span class="t" style="left:810.4px;top:876.87px;font-size:17px;color:#3d4656;letter-spacing:-0.772px;">Project</span>
<span class="t" style="left:971.9px;top:866.31px;font-size:14px;color:#2d3748;-webkit-text-stroke:0.65px #2d3748;letter-spacing:0.260px;">New</span>
<span class="t" style="left:1107.3px;top:866.71px;font-size:14px;color:#2d3748;-webkit-text-stroke:0.65px #2d3748;letter-spacing:0.519px;">Minor</span>
<span class="t" style="left:1261.4px;top:853.87px;font-size:17px;color:#2d3748;letter-spacing:0.038px;">6 Oct, 2025</span>
<span class="t" style="left:1261.4px;top:878.51px;font-size:14px;color:#9aa0a8;letter-spacing:-0.549px;">3 days ago</span>
<span class="t" style="left:1404.8px;top:863.97px;font-size:17px;color:#2d3748;">2</span>
<svg class="b" style="left:1522.2px;top:864.46px;" width="18.5" height="18.5" viewBox="0 0 24 24" fill="none" stroke="#8d939b" stroke-width="1.6" stroke-linecap="round" stroke-linejoin="round"><path d="M9 7m-4 0a4 4 0 1 0 8 0a4 4 0 1 0 -8 0"/><path d="M3 21v-2a4 4 0 0 1 4 -4h4a4 4 0 0 1 4 4v2"/><path d="M16 3.13a4 4 0 0 1 0 7.75"/><path d="M21 21v-2a4 4 0 0 0 -3 -3.85"/></svg>
<span class="t" style="left:1552.0px;top:863.97px;font-size:17px;color:#2f3a4b;letter-spacing:-1.008px;">Sumit Pathak</span>
<div class="b" style="left:1682px;top:857px;width:121px;height:31px;background:#e8e9ec;border-radius:5px;"></div>
<div class="b" style="left:1725px;top:857px;width:1px;height:31px;background:#dcdee2;"></div>
<div class="b" style="left:1770px;top:857px;width:1px;height:31px;background:#dcdee2;"></div>
<svg class="b" style="left:1694.5px;top:863.36px;" width="19" height="19" viewBox="0 0 24 24" fill="none" stroke="#2f3a2f" stroke-width="2" stroke-linecap="round" stroke-linejoin="round"><path d="M10 12a2 2 0 1 0 4 0a2 2 0 0 0 -4 0"/><path d="M21 12c-2.4 4 -5.4 6 -9 6c-3.6 0 -6.6 -2 -9 -6c2.4 -4 5.4 -6 9 -6c3.6 0 6.6 2 9 6"/></svg>
<svg class="b" style="left:1739.5px;top:862.86px;" width="19" height="19" viewBox="0 0 24 24" fill="none" stroke="#2f3a2f" stroke-width="1.9" stroke-linecap="round" stroke-linejoin="round"><path d="M4 20h4l10.5 -10.5a2.828 2.828 0 1 0 -4 -4l-10.5 10.5v4"/><path d="M13.5 6.5l4 4"/></svg>
<svg class="b" style="left:1781.6px;top:870.4px" width="10" height="5" viewBox="0 0 10 5"><path d="M0 0h10l-5 5z" fill="#3b4a38"/></svg>
<div class="b" style="left:357px;top:993.0px;width:1458px;height:1px;background:#e5e7eb;"></div>
<div class="b" style="left:369px;top:945px;width:104px;height:19px;background:#e3e5e3;border-radius:5px;"></div>
<span class="t" style="left:374.6px;top:947.44px;font-size:13px;color:#1c211c;font-weight:700;">DEF-2025-2379</span>
<svg class="b" style="left:496px;top:945.54px;" width="20" height="20" viewBox="0 0 20 20" fill="none" stroke="#9aa0a8" stroke-width="1.45" stroke-linecap="round" stroke-linejoin="round"><path d="M6 12.9 L3 15.8 V4.4 Q3 2.9 4.5 2.9 H14.5 Q16 2.9 16 4.4 V11.4 Q16 12.9 14.5 12.9 Z"/><path d="M9.4 5.6 V7.9"/><path d="M9.4 10.1 V10.2"/></svg>
<span class="t" style="left:526.5px;top:944.05px;font-size:17px;color:#2d3748;-webkit-text-stroke:0.65px #2d3748;letter-spacing:-0.066px;">Defect for 7Oct</span>
<svg class="b" style="left:807.3px;top:927.14px;" width="20" height="20" viewBox="0 0 24 24" fill="none" stroke="#8d939b" stroke-width="1.5" stroke-linecap="round" stroke-linejoin="round"><path d="M12 4l-8 4l8 4l8 -4l-8 -4"/><path d="M4 12l8 4l8 -4"/><path d="M4 16l8 4l8 -4"/></svg>
<span class="t" style="left:833.0px;top:931.95px;font-size:17px;color:#3d4656;letter-spacing:-0.769px;">Proxima AI</span>
<span class="t" style="left:810.4px;top:957.05px;font-size:17px;color:#3d4656;letter-spacing:-0.772px;">Project</span>
<span class="t" style="left:971.9px;top:946.49px;font-size:14px;color:#2d3748;-webkit-text-stroke:0.65px #2d3748;letter-spacing:0.260px;">New</span>
<span class="t" style="left:1261.4px;top:934.05px;font-size:17px;color:#2d3748;letter-spacing:0.038px;">7 Oct, 2025</span>
<span class="t" style="left:1261.4px;top:958.69px;font-size:14px;color:#9aa0a8;letter-spacing:-0.549px;">2 days ago</span>
<span class="t" style="left:1404.8px;top:944.15px;font-size:17px;color:#2d3748;">1</span>
<svg class="b" style="left:1522.2px;top:944.64px;" width="18.5" height="18.5" viewBox="0 0 24 24" fill="none" stroke="#8d939b" stroke-width="1.6" stroke-linecap="round" stroke-linejoin="round"><path d="M9 7m-4 0a4 4 0 1 0 8 0a4 4 0 1 0 -8 0"/><path d="M3 21v-2a4 4 0 0 1 4 -4h4a4 4 0 0 1 4 4v2"/><path d="M16 3.13a4 4 0 0 1 0 7.75"/><path d="M21 21v-2a4 4 0 0 0 -3 -3.85"/></svg>
<div class="b" style="left:1552px;top:953px;width:13px;height:2px;background:#6b7280;"></div>
<div class="b" style="left:1682px;top:938px;width:121px;height:31px;background:#e8e9ec;border-radius:5px;"></div>
<div class="b" style="left:1725px;top:938px;width:1px;height:31px;background:#dcdee2;"></div>
<div class="b" style="left:1770px;top:938px;width:1px;height:31px;background:#dcdee2;"></div>
<svg class="b" style="left:1694.5px;top:943.54px;" width="19" height="19" viewBox="0 0 24 24" fill="none" stroke="#2f3a2f" stroke-width="2" stroke-linecap="round" stroke-linejoin="round"><path d="M10 12a2 2 0 1 0 4 0a2 2 0 0 0 -4 0"/><path d="M21 12c-2.4 4 -5.4 6 -9 6c-3.6 0 -6.6 -2 -9 -6c2.4 -4 5.4 -6 9 -6c3.6 0 6.6 2 9 6"/></svg>
<svg class="b" style="left:1739.5px;top:943.04px;" width="19" height="19" viewBox="0 0 24 24" fill="none" stroke="#2f3a2f" stroke-width="1.9" stroke-linecap="round" stroke-linejoin="round"><path d="M4 20h4l10.5 -10.5a2.828 2.828 0 1 0 -4 -4l-10.5 10.5v4"/><path d="M13.5 6.5l4 4"/></svg>
<svg class="b" style="left:1781.6px;top:950.5px" width="10" height="5" viewBox="0 0 10 5"><path d="M0 0h10l-5 5z" fill="#3b4a38"/></svg>
<div class="b" style="left:357px;top:1073.0px;width:1458px;height:1px;background:#e5e7eb;"></div>
<div class="b" style="left:369px;top:1026px;width:104px;height:19px;background:#e3e5e3;border-radius:5px;"></div>
<span class="t" style="left:374.6px;top:1027.62px;font-size:13px;color:#1c211c;font-weight:700;">DEF-2025-2740</span>
<svg class="b" style="left:496px;top:1025.72px;" width="20" height="20" viewBox="0 0 20 20" fill="none" stroke="#9aa0a8" stroke-width="1.45" stroke-linecap="round" stroke-linejoin="round"><path d="M6 12.9 L3 15.8 V4.4 Q3 2.9 4.5 2.9 H14.5 Q16 2.9 16 4.4 V11.4 Q16 12.9 14.5 12.9 Z"/><path d="M9.4 5.6 V7.9"/><path d="M9.4 10.1 V10.2"/></svg>
<span class="t" style="left:526.5px;top:1024.23px;font-size:17px;color:#2d3748;-webkit-text-stroke:0.65px #2d3748;letter-spacing:-0.234px;">Defect 111</span>
<svg class="b" style="left:807.3px;top:1007.32px;" width="20" height="20" viewBox="0 0 24 24" fill="none" stroke="#8d939b" stroke-width="1.5" stroke-linecap="round" stroke-linejoin="round"><path d="M12 4l-8 4l8 4l8 -4l-8 -4"/><path d="M4 12l8 4l8 -4"/><path d="M4 16l8 4l8 -4"/></svg>
<span class="t" style="left:833.0px;top:1012.13px;font-size:17px;color:#3d4656;letter-spacing:-0.769px;">Proxima AI</span>
<span class="t" style="left:810.4px;top:1037.23px;font-size:17px;color:#3d4656;letter-spacing:-0.772px;">Project</span>
<span class="t" style="left:971.9px;top:1026.67px;font-size:14px;color:#2d3748;-webkit-text-stroke:0.65px #2d3748;letter-spacing:0.260px;">New</span>
<span class="t" style="left:1261.4px;top:1014.23px;font-size:17px;color:#2d3748;letter-spacing:0.038px;">4 Oct, 2025</span>
<span class="t" style="left:1261.4px;top:1038.87px;font-size:14px;color:#9aa0a8;letter-spacing:-0.549px;">5 days ago</span>
<span class="t" style="left:1404.8px;top:1024.33px;font-size:17px;color:#2d3748;">4</span>
<svg class="b" style="left:1522.2px;top:1024.82px;" width="18.5" height="18.5" viewBox="0 0 24 24" fill="none" stroke="#8d939b" stroke-width="1.6" stroke-linecap="round" stroke-linejoin="round"><path d="M9 7m-4 0a4 4 0 1 0 8 0a4 4 0 1 0 -8 0"/><path d="M3 21v-2a4 4 0 0 1 4 -4h4a4 4 0 0 1 4 4v2"/><path d="M16 3.13a4 4 0 0 1 0 7.75"/><path d="M21 21v-2a4 4 0 0 0 -3 -3.85"/></svg>
<div class="b" style="left:1552px;top:1033px;width:13px;height:2px;background:#6b7280;"></div>
<div class="b" style="left:1682px;top:1018px;width:121px;height:31px;background:#e8e9ec;border-radius:5px;"></div>
<div class="b" style="left:1725px;top:1018px;width:1px;height:31px;background:#dcdee2;"></div>
<div class="b" style="left:1770px;top:1018px;width:1px;height:31px;background:#dcdee2;"></div>
<svg class="b" style="left:1694.5px;top:1023.72px;" width="19" height="19" viewBox="0 0 24 24" fill="none" stroke="#2f3a2f" stroke-width="2" stroke-linecap="round" stroke-linejoin="round"><path d="M10 12a2 2 0 1 0 4 0a2 2 0 0 0 -4 0"/><path d="M21 12c-2.4 4 -5.4 6 -9 6c-3.6 0 -6.6 -2 -9 -6c2.4 -4 5.4 -6 9 -6c3.6 0 6.6 2 9 6"/></svg>
<svg class="b" style="left:1739.5px;top:1023.22px;" width="19" height="19" viewBox="0 0 24 24" fill="none" stroke="#2f3a2f" stroke-width="1.9" stroke-linecap="round" stroke-linejoin="round"><path d="M4 20h4l10.5 -10.5a2.828 2.828 0 1 0 -4 -4l-10.5 10.5v4"/><path d="M13.5 6.5l4 4"/></svg>
<svg class="b" style="left:1781.6px;top:1030.7px" width="10" height="5" viewBox="0 0 10 5"><path d="M0 0h10l-5 5z" fill="#3b4a38"/></svg>
<div class="b" style="left:357px;top:1154.0px;width:1458px;height:1px;background:#e5e7eb;"></div>
<div class="b" style="left:369px;top:1106px;width:104px;height:19px;background:#e3e5e3;border-radius:5px;"></div>
<span class="t" style="left:374.6px;top:1107.80px;font-size:13px;color:#1c211c;font-weight:700;">DEF-2025-3437</span>
<svg class="b" style="left:496px;top:1105.9px;" width="20" height="20" viewBox="0 0 20 20" fill="none" stroke="#9aa0a8" stroke-width="1.45" stroke-linecap="round" stroke-linejoin="round"><path d="M6 12.9 L3 15.8 V4.4 Q3 2.9 4.5 2.9 H14.5 Q16 2.9 16 4.4 V11.4 Q16 12.9 14.5 12.9 Z"/><path d="M9.4 5.6 V7.9"/><path d="M9.4 10.1 V10.2"/></svg>
<span class="t" style="left:526.5px;top:1104.41px;font-size:17px;color:#2d3748;-webkit-text-stroke:0.65px #2d3748;letter-spacing:-0.061px;">Defect Test</span>
<svg class="b" style="left:807.3px;top:1087.5px;" width="20" height="20" viewBox="0 0 24 24" fill="none" stroke="#8d939b" stroke-width="1.5" stroke-linecap="round" stroke-linejoin="round"><path d="M12 4l-8 4l8 4l8 -4l-8 -4"/><path d="M4 12l8 4l8 -4"/><path d="M4 16l8 4l8 -4"/></svg>
<span class="t" style="left:833.0px;top:1092.31px;font-size:17px;color:#3d4656;letter-spacing:-0.769px;">Proxima AI</span>
<span class="t" style="left:810.4px;top:1117.41px;font-size:17px;color:#3d4656;letter-spacing:-0.772px;">Project</span>
<span class="t" style="left:971.9px;top:1106.85px;font-size:14px;color:#2d3748;-webkit-text-stroke:0.65px #2d3748;letter-spacing:0.260px;">New</span>
<span class="t" style="left:1261.4px;top:1094.41px;font-size:17px;color:#2d3748;letter-spacing:0.038px;">6 Oct, 2025</span>
<span class="t" style="left:1261.4px;top:1119.05px;font-size:14px;color:#9aa0a8;letter-spacing:-0.549px;">3 days ago</span>
<span class="t" style="left:1404.8px;top:1104.51px;font-size:17px;color:#2d3748;">2</span>
<svg class="b" style="left:1522.2px;top:1105.0px;" width="18.5" height="18.5" viewBox="0 0 24 24" fill="none" stroke="#8d939b" stroke-width="1.6" stroke-linecap="round" stroke-linejoin="round"><path d="M9 7m-4 0a4 4 0 1 0 8 0a4 4 0 1 0 -8 0"/><path d="M3 21v-2a4 4 0 0 1 4 -4h4a4 4 0 0 1 4 4v2"/><path d="M16 3.13a4 4 0 0 1 0 7.75"/><path d="M21 21v-2a4 4 0 0 0 -3 -3.85"/></svg>
<div class="b" style="left:1552px;top:1113px;width:13px;height:2px;background:#6b7280;"></div>
<div class="b" style="left:1682px;top:1098px;width:121px;height:31px;background:#e8e9ec;border-radius:5px;"></div>
<div class="b" style="left:1725px;top:1098px;width:1px;height:31px;background:#dcdee2;"></div>
<div class="b" style="left:1770px;top:1098px;width:1px;height:31px;background:#dcdee2;"></div>
<svg class="b" style="left:1694.5px;top:1103.9px;" width="19" height="19" viewBox="0 0 24 24" fill="none" stroke="#2f3a2f" stroke-width="2" stroke-linecap="round" stroke-linejoin="round"><path d="M10 12a2 2 0 1 0 4 0a2 2 0 0 0 -4 0"/><path d="M21 12c-2.4 4 -5.4 6 -9 6c-3.6 0 -6.6 -2 -9 -6c2.4 -4 5.4 -6 9 -6c3.6 0 6.6 2 9 6"/></svg>
<svg class="b" style="left:1739.5px;top:1103.4px;" width="19" height="19" viewBox="0 0 24 24" fill="none" stroke="#2f3a2f" stroke-width="1.9" stroke-linecap="round" stroke-linejoin="round"><path d="M4 20h4l10.5 -10.5a2.828 2.828 0 1 0 -4 -4l-10.5 10.5v4"/><path d="M13.5 6.5l4 4"/></svg>
<svg class="b" style="left:1781.6px;top:1110.9px" width="10" height="5" viewBox="0 0 10 5"><path d="M0 0h10l-5 5z" fill="#3b4a38"/></svg>
<div class="b" style="left:357px;top:1234.0px;width:1458px;height:1px;background:#e5e7eb;"></div>
<div class="b" style="left:369px;top:1186px;width:104px;height:19px;background:#e3e5e3;border-radius:5px;"></div>
<span class="t" style="left:374.6px;top:1187.98px;font-size:13px;color:#1c211c;font-weight:700;">DEF-2025-5173</span>
<svg class="b" style="left:496px;top:1186.08px;" width="20" height="20" viewBox="0 0 20 20" fill="none" stroke="#9aa0a8" stroke-width="1.45" stroke-linecap="round" stroke-linejoin="round"><path d="M6 12.9 L3 15.8 V4.4 Q3 2.9 4.5 2.9 H14.5 Q16 2.9 16 4.4 V11.4 Q16 12.9 14.5 12.9 Z"/><path d="M9.4 5.6 V7.9"/><path d="M9.4 10.1 V10.2"/></svg>
<span class="t" style="left:526.5px;top:1184.59px;font-size:17px;color:#2d3748;-webkit-text-stroke:0.65px #2d3748;letter-spacing:-0.225px;">Defect 5</span>
<svg class="b" style="left:807.3px;top:1167.6799999999998px;" width="20" height="20" viewBox="0 0 24 24" fill="none" stroke="#8d939b" stroke-width="1.5" stroke-linecap="round" stroke-linejoin="round"><path d="M12 4l-8 4l8 4l8 -4l-8 -4"/><path d="M4 12l8 4l8 -4"/><path d="M4 16l8 4l8 -4"/></svg>
<span class="t" style="left:833.0px;top:1172.49px;font-size:17px;color:#3d4656;letter-spacing:-0.769px;">Proxima AI</span>
<span class="t" style="left:810.4px;top:1197.59px;font-size:17px;color:#3d4656;letter-spacing:-0.772px;">Project</span>
<span class="t" style="left:971.9px;top:1187.03px;font-size:14px;color:#2d3748;-webkit-text-stroke:0.65px #2d3748;letter-spacing:0.260px;">New</span>
<span class="t" style="left:1261.4px;top:1174.59px;font-size:17px;color:#2d3748;letter-spacing:0.038px;">5 Oct, 2025</span>
<span class="t" style="left:1261.4px;top:1199.23px;font-size:14px;color:#9aa0a8;letter-spacing:-0.549px;">4 days ago</span>
<span class="t" style="left:1404.8px;top:1184.69px;font-size:17px;color:#2d3748;">3</span>
<svg class="b" style="left:1522.2px;top:1185.1799999999998px;" width="18.5" height="18.5" viewBox="0 0 24 24" fill="none" stroke="#8d939b" stroke-width="1.6" stroke-linecap="round" stroke-linejoin="round"><path d="M9 7m-4 0a4 4 0 1 0 8 0a4 4 0 1 0 -8 0"/><path d="M3 21v-2a4 4 0 0 1 4 -4h4a4 4 0 0 1 4 4v2"/><path d="M16 3.13a4 4 0 0 1 0 7.75"/><path d="M21 21v-2a4 4 0 0 0 -3 -3.85"/></svg>
<div class="b" style="left:1552px;top:1194px;width:13px;height:2px;background:#6b7280;"></div>
<div class="b" style="left:1682px;top:1178px;width:121px;height:31px;background:#e8e9ec;border-radius:5px;"></div>
<div class="b" style="left:1725px;top:1178px;width:1px;height:31px;background:#dcdee2;"></div>
<div class="b" style="left:1770px;top:1178px;width:1px;height:31px;background:#dcdee2;"></div>
<svg class="b" style="left:1694.5px;top:1184.08px;" width="19" height="19" viewBox="0 0 24 24" fill="none" stroke="#2f3a2f" stroke-width="2" stroke-linecap="round" stroke-linejoin="round"><path d="M10 12a2 2 0 1 0 4 0a2 2 0 0 0 -4 0"/><path d="M21 12c-2.4 4 -5.4 6 -9 6c-3.6 0 -6.6 -2 -9 -6c2.4 -4 5.4 -6 9 -6c3.6 0 6.6 2 9 6"/></svg>
<svg class="b" style="left:1739.5px;top:1183.58px;" width="19" height="19" viewBox="0 0 24 24" fill="none" stroke="#2f3a2f" stroke-width="1.9" stroke-linecap="round" stroke-linejoin="round"><path d="M4 20h4l10.5 -10.5a2.828 2.828 0 1 0 -4 -4l-10.5 10.5v4"/><path d="M13.5 6.5l4 4"/></svg>
<svg class="b" style="left:1781.6px;top:1191.1px" width="10" height="5" viewBox="0 0 10 5"><path d="M0 0h10l-5 5z" fill="#3b4a38"/></svg>
<div class="b" style="left:357px;top:1314.0px;width:1458px;height:1px;background:#e5e7eb;"></div>
<div class="b" style="left:369px;top:1266px;width:104px;height:19px;background:#e3e5e3;border-radius:5px;"></div>
<span class="t" style="left:374.6px;top:1268.16px;font-size:13px;color:#1c211c;font-weight:700;">DEF-2025-6188</span>
<svg class="b" style="left:496px;top:1266.26px;" width="20" height="20" viewBox="0 0 20 20" fill="none" stroke="#9aa0a8" stroke-width="1.45" stroke-linecap="round" stroke-linejoin="round"><path d="M6 12.9 L3 15.8 V4.4 Q3 2.9 4.5 2.9 H14.5 Q16 2.9 16 4.4 V11.4 Q16 12.9 14.5 12.9 Z"/><path d="M9.4 5.6 V7.9"/><path d="M9.4 10.1 V10.2"/></svg>
<span class="t" style="left:526.5px;top:1264.77px;font-size:17px;color:#2d3748;-webkit-text-stroke:0.65px #2d3748;letter-spacing:-0.225px;">Defect 3</span>
<svg class="b" style="left:807.3px;top:1247.86px;" width="20" height="20" viewBox="0 0 24 24" fill="none" stroke="#8d939b" stroke-width="1.5" stroke-linecap="round" stroke-linejoin="round"><path d="M12 4l-8 4l8 4l8 -4l-8 -4"/><path d="M4 12l8 4l8 -4"/><path d="M4 16l8 4l8 -4"/></svg>
<span class="t" style="left:833.0px;top:1252.67px;font-size:17px;color:#3d4656;letter-spacing:-0.769px;">Proxima AI</span>
<span class="t" style="left:810.4px;top:1277.77px;font-size:17px;color:#3d4656;letter-spacing:-0.772px;">Project</span>
<span class="t" style="left:971.9px;top:1267.21px;font-size:14px;color:#2d3748;-webkit-text-stroke:0.65px #2d3748;letter-spacing:0.260px;">New</span>
<span class="t" style="left:1261.4px;top:1254.77px;font-size:17px;color:#2d3748;letter-spacing:0.038px;">6 Oct, 2025</span>
<span class="t" style="left:1261.4px;top:1279.41px;font-size:14px;color:#9aa0a8;letter-spacing:-0.549px;">3 days ago</span>
<span class="t" style="left:1404.8px;top:1264.87px;font-size:17px;color:#2d3748;">2</span>
<svg class="b" style="left:1522.2px;top:1265.36px;" width="18.5" height="18.5" viewBox="0 0 24 24" fill="none" stroke="#8d939b" stroke-width="1.6" stroke-linecap="round" stroke-linejoin="round"><path d="M9 7m-4 0a4 4 0 1 0 8 0a4 4 0 1 0 -8 0"/><path d="M3 21v-2a4 4 0 0 1 4 -4h4a4 4 0 0 1 4 4v2"/><path d="M16 3.13a4 4 0 0 1 0 7.75"/><path d="M21 21v-2a4 4 0 0 0 -3 -3.85"/></svg>
<div class="b" style="left:1552px;top:1274px;width:13px;height:2px;background:#6b7280;"></div>
<div class="b" style="left:1682px;top:1258px;width:121px;height:31px;background:#e8e9ec;border-radius:5px;"></div>
<div class="b" style="left:1725px;top:1258px;width:1px;height:31px;background:#dcdee2;"></div>
<div class="b" style="left:1770px;top:1258px;width:1px;height:31px;background:#dcdee2;"></div>
<svg class="b" style="left:1694.5px;top:1264.26px;" width="19" height="19" viewBox="0 0 24 24" fill="none" stroke="#2f3a2f" stroke-width="2" stroke-linecap="round" stroke-linejoin="round"><path d="M10 12a2 2 0 1 0 4 0a2 2 0 0 0 -4 0"/><path d="M21 12c-2.4 4 -5.4 6 -9 6c-3.6 0 -6.6 -2 -9 -6c2.4 -4 5.4 -6 9 -6c3.6 0 6.6 2 9 6"/></svg>
<svg class="b" style="left:1739.5px;top:1263.76px;" width="19" height="19" viewBox="0 0 24 24" fill="none" stroke="#2f3a2f" stroke-width="1.9" stroke-linecap="round" stroke-linejoin="round"><path d="M4 20h4l10.5 -10.5a2.828 2.828 0 1 0 -4 -4l-10.5 10.5v4"/><path d="M13.5 6.5l4 4"/></svg>
<svg class="b" style="left:1781.6px;top:1271.3px" width="10" height="5" viewBox="0 0 10 5"><path d="M0 0h10l-5 5z" fill="#3b4a38"/></svg>
<div class="b" style="left:357px;top:1394.0px;width:1458px;height:1px;background:#e5e7eb;"></div>
<div class="b" style="left:369px;top:1346px;width:104px;height:19px;background:#e3e5e3;border-radius:5px;"></div>
<span class="t" style="left:374.6px;top:1348.34px;font-size:13px;color:#1c211c;font-weight:700;">DEF-2025-7358</span>
<svg class="b" style="left:496px;top:1346.44px;" width="20" height="20" viewBox="0 0 20 20" fill="none" stroke="#9aa0a8" stroke-width="1.45" stroke-linecap="round" stroke-linejoin="round"><path d="M6 12.9 L3 15.8 V4.4 Q3 2.9 4.5 2.9 H14.5 Q16 2.9 16 4.4 V11.4 Q16 12.9 14.5 12.9 Z"/><path d="M9.4 5.6 V7.9"/><path d="M9.4 10.1 V10.2"/></svg>
<span class="t" style="left:526.5px;top:1344.95px;font-size:17px;color:#2d3748;-webkit-text-stroke:0.65px #2d3748;letter-spacing:-0.225px;">Defect 6</span>
<svg class="b" style="left:807.3px;top:1328.04px;" width="20" height="20" viewBox="0 0 24 24" fill="none" stroke="#8d939b" stroke-width="1.5" stroke-linecap="round" stroke-linejoin="round"><path d="M12 4l-8 4l8 4l8 -4l-8 -4"/><path d="M4 12l8 4l8 -4"/><path d="M4 16l8 4l8 -4"/></svg>
<span class="t" style="left:833.0px;top:1332.85px;font-size:17px;color:#3d4656;letter-spacing:-0.769px;">Proxima AI</span>
<span class="t" style="left:810.4px;top:1357.95px;font-size:17px;color:#3d4656;letter-spacing:-0.772px;">Project</span>
<span class="t" style="left:971.9px;top:1347.39px;font-size:14px;color:#2d3748;-webkit-text-stroke:0.65px #2d3748;letter-spacing:0.260px;">New</span>
<span class="t" style="left:1261.4px;top:1334.95px;font-size:17px;color:#2d3748;letter-spacing:0.038px;">4 Oct, 2025</span>
<span class="t" style="left:1261.4px;top:1359.59px;font-size:14px;color:#9aa0a8;letter-spacing:-0.549px;">5 days ago</span>
<span class="t" style="left:1404.8px;top:1345.05px;font-size:17px;color:#2d3748;">4</span>
<svg class="b" style="left:1522.2px;top:1345.54px;" width="18.5" height="18.5" viewBox="0 0 24 24" fill="none" stroke="#8d939b" stroke-width="1.6" stroke-linecap="round" stroke-linejoin="round"><path d="M9 7m-4 0a4 4 0 1 0 8 0a4 4 0 1 0 -8 0"/><path d="M3 21v-2a4 4 0 0 1 4 -4h4a4 4 0 0 1 4 4v2"/><path d="M16 3.13a4 4 0 0 1 0 7.75"/><path d="M21 21v-2a4 4 0 0 0 -3 -3.85"/></svg>
<div class="b" style="left:1552px;top:1354px;width:13px;height:2px;background:#6b7280;"></div>
<div class="b" style="left:1682px;top:1338px;width:121px;height:31px;background:#e8e9ec;border-radius:5px;"></div>
<div class="b" style="left:1725px;top:1338px;width:1px;height:31px;background:#dcdee2;"></div>
<div class="b" style="left:1770px;top:1338px;width:1px;height:31px;background:#dcdee2;"></div>
<svg class="b" style="left:1694.5px;top:1344.44px;" width="19" height="19" viewBox="0 0 24 24" fill="none" stroke="#2f3a2f" stroke-width="2" stroke-linecap="round" stroke-linejoin="round"><path d="M10 12a2 2 0 1 0 4 0a2 2 0 0 0 -4 0"/><path d="M21 12c-2.4 4 -5.4 6 -9 6c-3.6 0 -6.6 -2 -9 -6c2.4 -4 5.4 -6 9 -6c3.6 0 6.6 2 9 6"/></svg>
<svg class="b" style="left:1739.5px;top:1343.94px;" width="19" height="19" viewBox="0 0 24 24" fill="none" stroke="#2f3a2f" stroke-width="1.9" stroke-linecap="round" stroke-linejoin="round"><path d="M4 20h4l10.5 -10.5a2.828 2.828 0 1 0 -4 -4l-10.5 10.5v4"/><path d="M13.5 6.5l4 4"/></svg>
<svg class="b" style="left:1781.6px;top:1351.4px" width="10" height="5" viewBox="0 0 10 5"><path d="M0 0h10l-5 5z" fill="#3b4a38"/></svg>
<div class="b" style="left:357px;top:1474.0px;width:1458px;height:1px;background:#e5e7eb;"></div>
<div class="b" style="left:369px;top:1427px;width:104px;height:19px;background:#e3e5e3;border-radius:5px;"></div>
<span class="t" style="left:374.6px;top:1428.52px;font-size:13px;color:#1c211c;font-weight:700;">DEF-2025-7622</span>
<svg class="b" style="left:496px;top:1426.6200000000001px;" width="20" height="20" viewBox="0 0 20 20" fill="none" stroke="#9aa0a8" stroke-width="1.45" stroke-linecap="round" stroke-linejoin="round"><path d="M6 12.9 L3 15.8 V4.4 Q3 2.9 4.5 2.9 H14.5 Q16 2.9 16 4.4 V11.4 Q16 12.9 14.5 12.9 Z"/><path d="M9.4 5.6 V7.9"/><path d="M9.4 10.1 V10.2"/></svg>
<span class="t" style="left:526.5px;top:1425.13px;font-size:17px;color:#2d3748;-webkit-text-stroke:0.65px #2d3748;letter-spacing:-0.225px;">Defect 4</span>
<svg class="b" style="left:807.3px;top:1408.22px;" width="20" height="20" viewBox="0 0 24 24" fill="none" stroke="#8d939b" stroke-width="1.5" stroke-linecap="round" stroke-linejoin="round"><path d="M12 4l-8 4l8 4l8 -4l-8 -4"/><path d="M4 12l8 4l8 -4"/><path d="M4 16l8 4l8 -4"/></svg>
<span class="t" style="left:833.0px;top:1413.03px;font-size:17px;color:#3d4656;letter-spacing:-0.769px;">Proxima AI</span>
<span class="t" style="left:810.4px;top:1438.13px;font-size:17px;color:#3d4656;letter-spacing:-0.772px;">Project</span>
<span class="t" style="left:971.9px;top:1427.57px;font-size:14px;color:#2d3748;-webkit-text-stroke:0.65px #2d3748;letter-spacing:0.260px;">New</span>
<span class="t" style="left:1261.4px;top:1415.13px;font-size:17px;color:#2d3748;letter-spacing:0.038px;">5 Oct, 2025</span>
<span class="t" style="left:1261.4px;top:1439.77px;font-size:14px;color:#9aa0a8;letter-spacing:-0.549px;">4 days ago</span>
<span class="t" style="left:1404.8px;top:1425.23px;font-size:17px;color:#2d3748;">3</span>
<svg class="b" style="left:1522.2px;top:1425.72px;" width="18.5" height="18.5" viewBox="0 0 24 24" fill="none" stroke="#8d939b" stroke-width="1.6" stroke-linecap="round" stroke-linejoin="round"><path d="M9 7m-4 0a4 4 0 1 0 8 0a4 4 0 1 0 -8 0"/><path d="M3 21v-2a4 4 0 0 1 4 -4h4a4 4 0 0 1 4 4v2"/><path d="M16 3.13a4 4 0 0 1 0 7.75"/><path d="M21 21v-2a4 4 0 0 0 -3 -3.85"/></svg>
<div class="b" style="left:1552px;top:1434px;width:13px;height:2px;background:#6b7280;"></div>
<div class="b" style="left:1682px;top:1419px;width:121px;height:31px;background:#e8e9ec;border-radius:5px;"></div>
<div class="b" style="left:1725px;top:1419px;width:1px;height:31px;background:#dcdee2;"></div>
<div class="b" style="left:1770px;top:1419px;width:1px;height:31px;background:#dcdee2;"></div>
<svg class="b" style="left:1694.5px;top:1424.6200000000001px;" width="19" height="19" viewBox="0 0 24 24" fill="none" stroke="#2f3a2f" stroke-width="2" stroke-linecap="round" stroke-linejoin="round"><path d="M10 12a2 2 0 1 0 4 0a2 2 0 0 0 -4 0"/><path d="M21 12c-2.4 4 -5.4 6 -9 6c-3.6 0 -6.6 -2 -9 -6c2.4 -4 5.4 -6 9 -6c3.6 0 6.6 2 9 6"/></svg>
<svg class="b" style="left:1739.5px;top:1424.1200000000001px;" width="19" height="19" viewBox="0 0 24 24" fill="none" stroke="#2f3a2f" stroke-width="1.9" stroke-linecap="round" stroke-linejoin="round"><path d="M4 20h4l10.5 -10.5a2.828 2.828 0 1 0 -4 -4l-10.5 10.5v4"/><path d="M13.5 6.5l4 4"/></svg>
<svg class="b" style="left:1781.6px;top:1431.6px" width="10" height="5" viewBox="0 0 10 5"><path d="M0 0h10l-5 5z" fill="#3b4a38"/></svg>
<span class="t" style="left:357.7px;top:1505.01px;font-size:17px;color:#374151;letter-spacing:-0.466px;">Showing 1 to 10 of 11 entries</span>
<div class="b" style="left:1626px;top:1493px;width:42px;height:42px;background:#fff;border:1px solid #e3e6ea;border-radius:7px;"></div>
<div class="b" style="left:1675px;top:1493px;width:42px;height:42px;background:#3e5e3d;border-radius:7px;"></div>
<div class="b" style="left:1724px;top:1493px;width:42px;height:42px;background:#fff;border:1px solid #e3e6ea;border-radius:7px;"></div>
<div class="b" style="left:1773px;top:1493px;width:42px;height:42px;background:#fff;border:1px solid #e3e6ea;border-radius:7px;"></div>
<span class="t" style="left:1692.5px;top:1504.71px;font-size:17px;color:#fff;">1</span>
<span class="t" style="left:1740.0px;top:1504.71px;font-size:17px;color:#2d3748;">2</span>
<span class="t" style="left:1643.5px;top:1504.61px;font-size:17px;color:#8a9099;">‹</span>
<span class="t" style="left:1790.5px;top:1504.61px;font-size:17px;color:#2d3748;">›</span>
<div class="b" style="left:264px;top:1578px;width:1644px;height:50px;background:#fff;border-top:1px solid #e4e7eb;"></div>
<span class="t" style="left:288.0px;top:1594.81px;font-size:17px;color:#6b7280;letter-spacing:-0.390px;">© 2025 DRM By</span>
<span class="t" style="left:412.0px;top:1594.81px;font-size:17px;color:#4b5563;-webkit-text-stroke:0.65px #4b5563;letter-spacing:0.038px;">Webtonic Technologies</span>
<span class="t" style="left:1707.0px;top:1594.71px;font-size:17px;color:#6b7280;letter-spacing:-0.505px;">59.5GB of</span>
<span class="t" style="left:1786.6px;top:1594.71px;font-size:17px;color:#4b5563;font-weight:700;letter-spacing:0.568px;">200GB</span>
<span class="t" style="left:1848.5px;top:1594.71px;font-size:17px;color:#6b7280;letter-spacing:-0.995px;">Free.</span>
</body></html>
